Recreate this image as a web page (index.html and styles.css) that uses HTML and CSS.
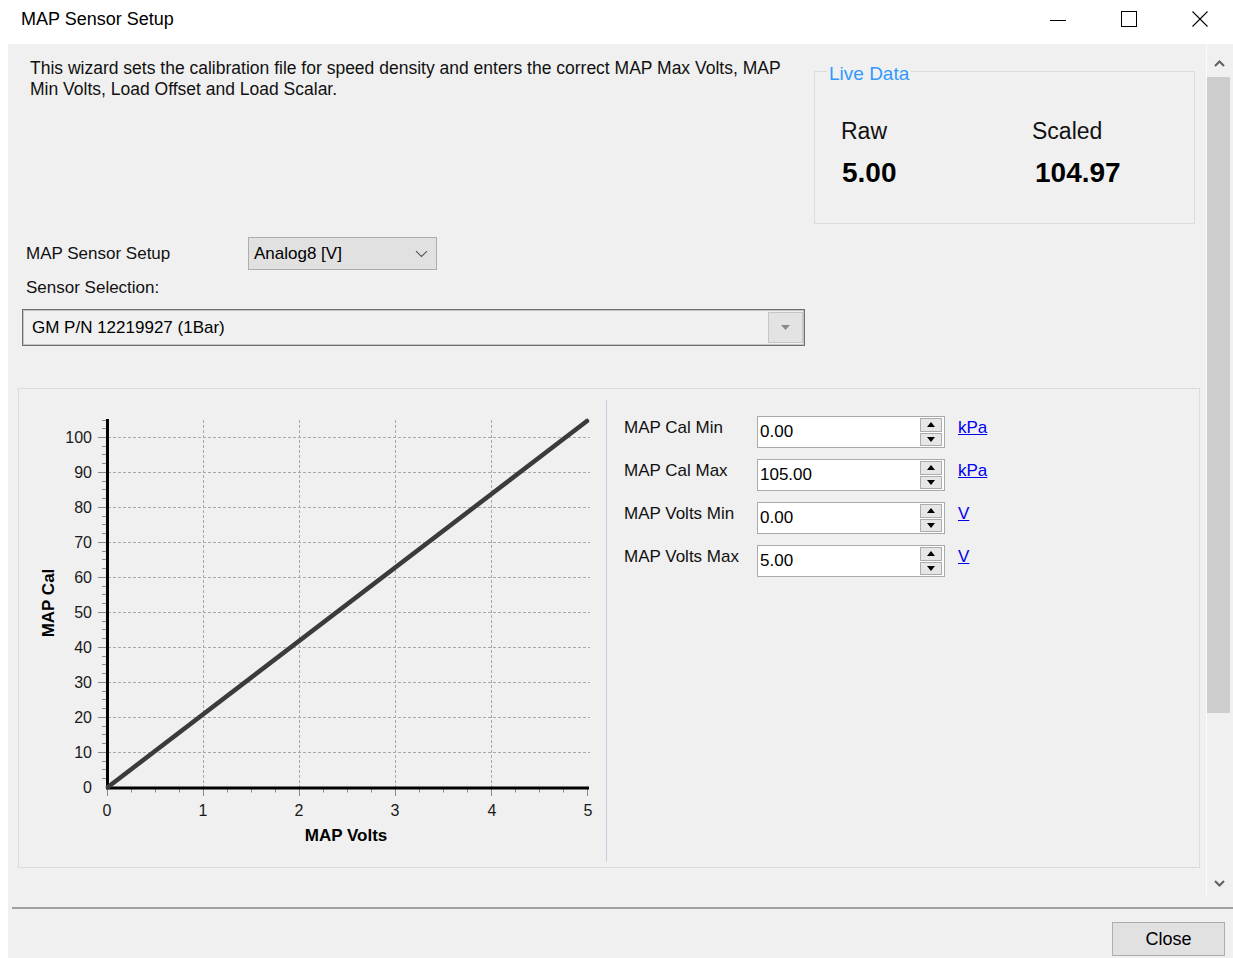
FILE: index.html
```html
<!DOCTYPE html>
<html lang="en">
<head>
<meta charset="utf-8">
<title>MAP Sensor Setup</title>
<link rel="stylesheet" href="styles.css">
</head>
<body>
<div class="window">
  <header class="titlebar">
    <span class="title">MAP Sensor Setup</span>
    <div class="controls">
      <span class="ctl"><svg width="16" height="16" viewBox="0 0 16 16"><path d="M0 9.5H16" stroke="#000" stroke-width="1"/></svg></span>
      <span class="ctl"><svg width="16" height="16" viewBox="0 0 16 16"><rect x="0.5" y="0.5" width="15" height="15" fill="none" stroke="#000" stroke-width="1"/></svg></span>
      <span class="ctl"><svg width="16" height="16" viewBox="0 0 16 16"><path d="M0.5 0.5L15.5 15.5M15.5 0.5L0.5 15.5" stroke="#000" stroke-width="1.1"/></svg></span>
    </div>
  </header>

  <main class="client">
    <div class="scroller">
      <div class="content">
        <section class="top">
          <p class="intro">This wizard sets the calibration file for speed density and enters the correct MAP Max Volts, MAP Min Volts, Load Offset and Load Scalar.</p>
          <div class="group">
            <span class="legend">Live Data</span>
            <div class="live">
              <span class="live-label">Raw</span>
              <span class="live-label">Scaled</span>
              <span class="live-value">5.00</span>
              <span class="live-value shift">104.97</span>
            </div>
          </div>
        </section>

        <div class="setup-row">
          <span class="label">MAP Sensor Setup</span>
          <div class="select">
            <span>Analog8 [V]</span>
            <svg width="13" height="8" viewBox="0 0 13 8"><path d="M1 1.2L6.5 6.5L12 1.2" fill="none" stroke="#555" stroke-width="1.1"/></svg>
          </div>
        </div>
        <div class="sel-label">Sensor Selection:</div>
        <div class="combo">
          <span class="combo-text">GM P/N 12219927 (1Bar)</span>
          <span class="combo-btn"><svg width="9" height="5" viewBox="0 0 9 5"><polygon points="0,0 9,0 4.5,5" fill="#8a8a8a"/></svg></span>
        </div>

        <section class="panel">
          <svg class="chart" width="587" height="478" viewBox="19 389 587 478">
            <g class="grid">
              <path d="M108 752.5H590M108 717.5H590M108 682.5H590M108 647.5H590M108 612.5H590M108 577.5H590M108 542.5H590M108 507.5H590M108 472.5H590M108 437.5H590"/>
              <path d="M203.5 420V787M299.5 420V787M395.5 420V787M491.5 420V787"/>
            </g>
            <g class="ticks">
              <path d="M98 752.5H106M98 717.5H106M98 682.5H106M98 647.5H106M98 612.5H106M98 577.5H106M98 542.5H106M98 507.5H106M98 472.5H106M98 437.5H106"/>
              <path d="M102 778.5H106M102 769.5H106M102 761.5H106M102 743.5H106M102 734.5H106M102 726.5H106M102 708.5H106M102 699.5H106M102 691.5H106M102 673.5H106M102 664.5H106M102 656.5H106M102 638.5H106M102 629.5H106M102 621.5H106M102 603.5H106M102 594.5H106M102 586.5H106M102 568.5H106M102 559.5H106M102 551.5H106M102 533.5H106M102 524.5H106M102 516.5H106M102 498.5H106M102 489.5H106M102 481.5H106M102 463.5H106M102 454.5H106M102 446.5H106M102 428.5H106M102 420.5H106"/>
              <path d="M107.5 789V796M203.5 789V796M299.5 789V796M395.5 789V796M491.5 789V796M587.5 789V796"/>
              <path d="M131.5 789V792.5M155.5 789V792.5M179.5 789V792.5M227.5 789V792.5M251.5 789V792.5M275.5 789V792.5M323.5 789V792.5M347.5 789V792.5M371.5 789V792.5M419.5 789V792.5M443.5 789V792.5M467.5 789V792.5M515.5 789V792.5M539.5 789V792.5M563.5 789V792.5"/>
            </g>
            <path class="axis" d="M107.5 419V789M106 788H589"/>
            <path class="series" d="M108 787L587 421"/>
            <g class="ylabels">
              <text x="92" y="437.5">100</text>
              <text x="92" y="472.5">90</text>
              <text x="92" y="507.5">80</text>
              <text x="92" y="542.5">70</text>
              <text x="92" y="577.5">60</text>
              <text x="92" y="612.5">50</text>
              <text x="92" y="647.5">40</text>
              <text x="92" y="682.5">30</text>
              <text x="92" y="717.5">20</text>
              <text x="92" y="752.5">10</text>
              <text x="92" y="787.5">0</text>
            </g>
            <g class="xlabels">
              <text x="107" y="810">0</text>
              <text x="203" y="810">1</text>
              <text x="299" y="810">2</text>
              <text x="395" y="810">3</text>
              <text x="492" y="810">4</text>
              <text x="588" y="810">5</text>
            </g>
            <text class="axis-title" x="346" y="835">MAP Volts</text>
            <text class="axis-title" x="0" y="0" transform="translate(48 603) rotate(-90)">MAP Cal</text>
          </svg>
          <div class="divider"></div>
          <div class="fields">
            <div class="field">
              <span class="field-label">MAP Cal Min</span>
              <div class="numbox"><span class="num">0.00</span><span class="spin"><span class="spin-btn"><svg width="8" height="5" viewBox="0 0 8 5"><polygon points="0,5 4,0 8,5" fill="#000"/></svg></span><span class="spin-btn"><svg width="8" height="5" viewBox="0 0 8 5"><polygon points="0,0 8,0 4,5" fill="#000"/></svg></span></span></div>
              <a class="unit" href="#">kPa</a>
            </div>
            <div class="field">
              <span class="field-label">MAP Cal Max</span>
              <div class="numbox"><span class="num">105.00</span><span class="spin"><span class="spin-btn"><svg width="8" height="5" viewBox="0 0 8 5"><polygon points="0,5 4,0 8,5" fill="#000"/></svg></span><span class="spin-btn"><svg width="8" height="5" viewBox="0 0 8 5"><polygon points="0,0 8,0 4,5" fill="#000"/></svg></span></span></div>
              <a class="unit" href="#">kPa</a>
            </div>
            <div class="field">
              <span class="field-label">MAP Volts Min</span>
              <div class="numbox"><span class="num">0.00</span><span class="spin"><span class="spin-btn"><svg width="8" height="5" viewBox="0 0 8 5"><polygon points="0,5 4,0 8,5" fill="#000"/></svg></span><span class="spin-btn"><svg width="8" height="5" viewBox="0 0 8 5"><polygon points="0,0 8,0 4,5" fill="#000"/></svg></span></span></div>
              <a class="unit" href="#">V</a>
            </div>
            <div class="field">
              <span class="field-label">MAP Volts Max</span>
              <div class="numbox"><span class="num">5.00</span><span class="spin"><span class="spin-btn"><svg width="8" height="5" viewBox="0 0 8 5"><polygon points="0,5 4,0 8,5" fill="#000"/></svg></span><span class="spin-btn"><svg width="8" height="5" viewBox="0 0 8 5"><polygon points="0,0 8,0 4,5" fill="#000"/></svg></span></span></div>
              <a class="unit" href="#">V</a>
            </div>
          </div>
        </section>
      </div>

      <div class="vscroll">
        <div class="arrow up"><svg width="11" height="7" viewBox="0 0 11 7"><path d="M1 6L5.5 1.5L10 6" fill="none" stroke="#606060" stroke-width="2"/></svg></div>
        <div class="thumb"></div>
        <div class="track"></div>
        <div class="arrow down"><svg width="11" height="7" viewBox="0 0 11 7"><path d="M1 1L5.5 5.5L10 1" fill="none" stroke="#606060" stroke-width="2"/></svg></div>
      </div>
    </div>

    <div class="separator"></div>
    <footer class="footer">
      <button class="btn" type="button">Close</button>
    </footer>
  </main>
</div>
</body>
</html>
```

FILE: styles.css
```css
* {
  box-sizing: border-box;
}

html,
body {
  margin: 0;
  padding: 0;
}

body {
  width: 1233px;
  height: 958px;
  overflow: hidden;
  background: #ffffff;
  color: #000000;
  font-family: "Liberation Sans", Arial, sans-serif;
}

.window {
  display: flex;
  flex-direction: column;
  height: 958px;
}

/* ---- title bar ---- */
.titlebar {
  flex: none;
  height: 44px;
  display: flex;
  align-items: center;
  padding: 0 25px 6px 21px;
  background: #ffffff;
}

.title {
  flex: 1;
  font-size: 18px;
  color: #000000;
}

.controls {
  display: flex;
  gap: 55px;
}

.ctl,
.ctl svg {
  display: block;
  width: 16px;
  height: 16px;
}

/* ---- client area ---- */
.client {
  flex: 1;
  margin-left: 8px;
  display: flex;
  flex-direction: column;
  background: #f0f0f0;
}

.scroller {
  flex: none;
  height: 852px;
  display: flex;
}

.content {
  flex: 1;
  min-width: 0;
}

.top {
  display: flex;
  align-items: flex-start;
}

.intro {
  flex: 1;
  margin: 0;
  padding: 14px 0 0 22px;
  font-size: 17.5px;
  line-height: 21px;
  color: #111111;
}

/* group box */
.group {
  position: relative;
  flex: none;
  width: 381px;
  height: 153px;
  margin: 27px 11px 0 14px;
  border: 1px solid #dcdcdc;
}

.legend {
  position: absolute;
  top: -9px;
  left: 12px;
  padding: 0 2px;
  background: #f0f0f0;
  color: #3399ff;
  font-size: 19px;
  line-height: 22px;
}

.live {
  display: grid;
  grid-template-columns: 191px 1fr;
  row-gap: 12px;
  padding: 45px 0 0 26px;
}

.live-label {
  font-size: 23px;
  line-height: 28px;
  color: #111111;
}

.live-value {
  font-size: 28px;
  line-height: 32px;
  font-weight: bold;
  color: #000000;
  padding-left: 1px;
}

.live-value.shift {
  padding-left: 3px;
}

/* selectors */
.setup-row {
  display: flex;
  align-items: center;
  margin: 13px 0 0 18px;
}

.label {
  width: 222px;
  font-size: 17px;
  line-height: 21px;
  color: #111111;
}

.select {
  width: 189px;
  height: 33px;
  display: flex;
  align-items: center;
  justify-content: space-between;
  padding: 0 8px 0 5px;
  background: #e1e1e1;
  border: 1px solid #adadad;
  font-size: 17px;
  color: #000000;
}

.select svg {
  display: block;
}

.sel-label {
  margin: 7px 0 0 18px;
  font-size: 17px;
  line-height: 21px;
  color: #111111;
}

.combo {
  width: 783px;
  height: 37px;
  margin: 11px 0 0 14px;
  display: flex;
  align-items: stretch;
  border: 1px solid #6f6f6f;
  box-shadow: inset 0 0 0 1px #c4c4c4;
  background: #f0f0f0;
}

.combo-text {
  flex: 1;
  display: flex;
  align-items: center;
  padding-left: 9px;
  font-size: 17px;
  color: #000000;
}

.combo-btn {
  width: 35px;
  margin: 2px 1px 2px 0;
  display: flex;
  align-items: center;
  justify-content: center;
  background: #e3e3e3;
  border: 1px solid #c6c6c6;
}

.combo-btn svg {
  display: block;
}

/* chart + value panel */
.panel {
  width: 1182px;
  height: 480px;
  margin: 42px 0 0 10px;
  display: flex;
  border: 1px solid #dcdcdc;
}

.chart {
  display: block;
  flex: none;
}

.grid path {
  fill: none;
  stroke: #a9a9a9;
  stroke-width: 1;
  stroke-dasharray: 3 2;
}

.ticks path {
  fill: none;
  stroke: #8a8a8a;
  stroke-width: 1;
}

.axis {
  fill: none;
  stroke: #000000;
  stroke-width: 3;
}

.series {
  fill: none;
  stroke: #3b3b3b;
  stroke-width: 4.5;
  stroke-linecap: round;
}

.ylabels text,
.xlabels text {
  font-family: "Liberation Sans", Arial, sans-serif;
  font-size: 16px;
  fill: #1a1a1a;
  dominant-baseline: central;
}

.ylabels text {
  text-anchor: end;
}

.xlabels text {
  text-anchor: middle;
}

.axis-title {
  font-family: "Liberation Sans", Arial, sans-serif;
  font-size: 17px;
  font-weight: bold;
  fill: #000000;
  text-anchor: middle;
  dominant-baseline: central;
}

.divider {
  flex: none;
  width: 1px;
  margin: 11px 0 5px;
  background: #c7d1dd;
}

.fields {
  flex: 1;
  padding: 27px 0 0 17px;
}

.field {
  display: flex;
  align-items: flex-start;
  height: 43px;
}

.field-label {
  width: 133px;
  font-size: 17px;
  line-height: 24px;
  color: #111111;
}

.numbox {
  width: 188px;
  height: 32px;
  display: flex;
  align-items: center;
  padding: 0 2px 0 2px;
  background: #ffffff;
  border: 1px solid #a9a9a9;
}

.num {
  flex: 1;
  font-size: 17px;
  color: #000000;
}

.spin {
  width: 22px;
  height: 28px;
  display: flex;
  flex-direction: column;
  gap: 1px;
}

.spin-btn {
  flex: 1;
  display: flex;
  align-items: center;
  justify-content: center;
  background: #e6e6e6;
  border: 1px solid #acacac;
}

.spin-btn svg {
  display: block;
}

.unit {
  margin-left: 13px;
  font-size: 17px;
  line-height: 24px;
  color: #0000ee;
  text-decoration: underline;
}

/* vertical scrollbar */
.vscroll {
  flex: none;
  width: 27px;
  display: flex;
  flex-direction: column;
  border-left: 1px solid #fbfbfb;
  background: #f0f0f0;
}

.arrow {
  display: flex;
  justify-content: center;
  padding-right: 2px;
}

.arrow svg {
  display: block;
}

.arrow.up {
  height: 33px;
  align-items: flex-end;
  padding-bottom: 10px;
}

.arrow.down {
  height: 26px;
  align-items: center;
}

.thumb {
  height: 636px;
  margin-right: 3px;
  background: #cdcdcd;
}

.track {
  flex: 1;
}

/* footer */
.separator {
  flex: none;
  height: 2px;
  margin: 11px 0 0 4px;
  background: #a0a0a0;
}

.footer {
  display: flex;
  justify-content: flex-end;
  padding: 13px 8px 0 0;
}

.btn {
  width: 113px;
  height: 34px;
  padding: 0;
  background: #e1e1e1;
  border: 1px solid #adadad;
  font-family: "Liberation Sans", Arial, sans-serif;
  font-size: 18px;
  color: #000000;
}
```
